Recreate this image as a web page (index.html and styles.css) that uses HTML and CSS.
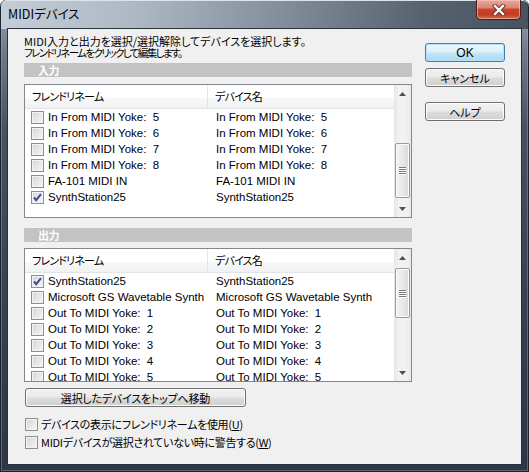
FILE: index.html
```html
<!DOCTYPE html>
<html lang="ja">
<head>
<meta charset="utf-8">
<title>MIDIデバイス</title>
<link rel="stylesheet" href="styles.css">
</head>
<body>
<div class="window">
  <div class="titlebar">
    <span class="title">MIDIデバイス</span>
    <div class="close">
      <svg width="14" height="12" viewBox="0 0 14 12"><path class="xo" d="M3 2L11 10M11 2L3 10"/><path class="xi" d="M3 2L11 10M11 2L3 10"/></svg>
    </div>
  </div>
  <div class="client">
    <div class="main">
      <div class="intro"><div class="l1">MIDI入力と出力を選択/選択解除してデバイスを選択します。</div><div class="l2">フレンドリネームをクリックして編集します。</div></div>
      <div class="section"><span>入力</span></div>
      <div class="listbox">
        <div class="lv">
          <div class="header"><div class="hc c1">フレンドリネーム</div><div class="hc c2">デバイス名</div></div>
          <div class="row"><div class="cell c1"><span class="cb"></span><span class="t">In From MIDI Yoke:  5</span></div><div class="cell c2">In From MIDI Yoke:  5</div></div>
          <div class="row"><div class="cell c1"><span class="cb"></span><span class="t">In From MIDI Yoke:  6</span></div><div class="cell c2">In From MIDI Yoke:  6</div></div>
          <div class="row"><div class="cell c1"><span class="cb"></span><span class="t">In From MIDI Yoke:  7</span></div><div class="cell c2">In From MIDI Yoke:  7</div></div>
          <div class="row"><div class="cell c1"><span class="cb"></span><span class="t">In From MIDI Yoke:  8</span></div><div class="cell c2">In From MIDI Yoke:  8</div></div>
          <div class="row"><div class="cell c1"><span class="cb"></span><span class="t">FA-101 MIDI IN</span></div><div class="cell c2">FA-101 MIDI IN</div></div>
          <div class="row"><div class="cell c1"><span class="cb on"><svg width="11" height="11" viewBox="0 0 11 11"><path d="M2 5.5l2.2 2.6L9 2.2"/></svg></span><span class="t">SynthStation25</span></div><div class="cell c2">SynthStation25</div></div>
        </div>
        <div class="sb">
          <div class="arrow"><svg width="7" height="4" viewBox="0 0 7 4"><path d="M0 4L3.5 0L7 4Z"/></svg></div>
          <div class="track"><div class="thumb bottom"><span></span><span></span><span></span><span></span></div></div>
          <div class="arrow"><svg width="7" height="4" viewBox="0 0 7 4"><path d="M0 0L3.5 4L7 0Z"/></svg></div>
        </div>
      </div>
      <div class="section s2"><span>出力</span></div>
      <div class="listbox l2">
        <div class="lv">
          <div class="header"><div class="hc c1">フレンドリネーム</div><div class="hc c2">デバイス名</div></div>
          <div class="row"><div class="cell c1"><span class="cb on"><svg width="11" height="11" viewBox="0 0 11 11"><path d="M2 5.5l2.2 2.6L9 2.2"/></svg></span><span class="t">SynthStation25</span></div><div class="cell c2">SynthStation25</div></div>
          <div class="row"><div class="cell c1"><span class="cb"></span><span class="t">Microsoft GS Wavetable Synth</span></div><div class="cell c2">Microsoft GS Wavetable Synth</div></div>
          <div class="row"><div class="cell c1"><span class="cb"></span><span class="t">Out To MIDI Yoke:  1</span></div><div class="cell c2">Out To MIDI Yoke:  1</div></div>
          <div class="row"><div class="cell c1"><span class="cb"></span><span class="t">Out To MIDI Yoke:  2</span></div><div class="cell c2">Out To MIDI Yoke:  2</div></div>
          <div class="row"><div class="cell c1"><span class="cb"></span><span class="t">Out To MIDI Yoke:  3</span></div><div class="cell c2">Out To MIDI Yoke:  3</div></div>
          <div class="row"><div class="cell c1"><span class="cb"></span><span class="t">Out To MIDI Yoke:  4</span></div><div class="cell c2">Out To MIDI Yoke:  4</div></div>
          <div class="row"><div class="cell c1"><span class="cb"></span><span class="t">Out To MIDI Yoke:  5</span></div><div class="cell c2">Out To MIDI Yoke:  5</div></div>
        </div>
        <div class="sb">
          <div class="arrow"><svg width="7" height="4" viewBox="0 0 7 4"><path d="M0 4L3.5 0L7 4Z"/></svg></div>
          <div class="track"><div class="thumb top"><span></span><span></span><span></span><span></span></div></div>
          <div class="arrow"><svg width="7" height="4" viewBox="0 0 7 4"><path d="M0 0L3.5 4L7 0Z"/></svg></div>
        </div>
      </div>
      <div class="btn move">選択したデバイスをトップへ移動</div>
      <label class="opt o1"><span class="cb"></span><span>デバイスの表示にフレンドリネームを使用(<u>U</u>)</span></label>
      <label class="opt o2"><span class="cb"></span><span>MIDIデバイスが選択されていない時に警告する(<u>W</u>)</span></label>
    </div>
    <div class="side">
      <div class="btn default">OK</div>
      <div class="btn cancel">キャンセル</div>
      <div class="btn help">ヘルプ</div>
    </div>
  </div>
</div>
</body>
</html>
```

FILE: styles.css
```css
* { box-sizing: border-box; }
html, body { margin: 0; padding: 0; }
body {
  width: 529px;
  height: 472px;
  overflow: hidden;
  background: #ffffff;
  font-family: "Liberation Sans", "Noto Sans CJK JP", sans-serif;
  font-size: 12px;
  color: #000;
  font-feature-settings: "palt";
}
.window {
  width: 529px;
  height: 472px;
  display: flex;
  flex-direction: column;
  border-radius: 6px 6px 0 0;
  background: linear-gradient(to bottom, #9fabb8 0px, #6f7b8a 50px, #46525f 130px, #36424f 300px, #2c3743 100%);
  box-shadow: inset 0 0 0 1px #1c2530, inset 0 0 0 2px rgba(170,185,200,0.35);
  overflow: hidden;
}
.titlebar {
  height: 29px;
  flex: none;
  display: flex;
  align-items: flex-start;
  padding-left: 8px;
  background: linear-gradient(to right, #c4cdd7 0%, #aeb9c5 25%, #7f8b99 55%, #56626f 80%, #47535f 100%);
  box-shadow: inset 0 1px 0 #dde3ea, inset 1px 0 0 #1c2530, inset -1px 0 0 #1c2530;
  border-radius: 6px 6px 0 0;
}
.title {
  margin-top: 7px;
  line-height: 14px;
  font-size: 12.5px;
  color: #000;
  font-family: "Noto Sans CJK JP", sans-serif;
}
.close {
  margin-left: auto;
  margin-right: 8px;
  width: 45px;
  height: 20px;
  border: 1px solid #4a1f1b;
  border-top: none;
  border-radius: 0 0 5px 5px;
  background: linear-gradient(to bottom, #e9aa9b 0%, #d98672 40%, #c9452e 50%, #c43a22 75%, #d8684c 100%);
  box-shadow: inset 0 0 0 1px rgba(255, 210, 200, 0.55);
  display: flex;
  align-items: center;
  justify-content: center;
}
.close svg { display: block; }
.xo { stroke: #6b2a22; stroke-width: 4.2; stroke-linecap: square; fill: none; }
.xi { stroke: #ffffff; stroke-width: 2.4; stroke-linecap: square; fill: none; }

.client {
  flex: 1;
  margin: 0 8px 8px 8px;
  background: #f0f0f0;
  box-shadow: 0 0 0 1px #27313c;
  display: flex;
  gap: 13px;
  padding: 6px 16px 0 16px;
}
.main {
  width: 388px;
  flex: none;
  display: flex;
  flex-direction: column;
}
.intro {
  font-size: 11px;
  font-family: "Noto Sans CJK JP", sans-serif;
  white-space: nowrap;
}
.intro .l1, .intro .l2 { height: 12px; line-height: 12px; }
.intro .l1 { letter-spacing: 0; }
.intro .l2 { font-size: 10.5px; letter-spacing: -1.6px; }
.section {
  margin-top: 4px;
  height: 14px;
  background: #c3c3c3;
  padding-left: 14px;
  font-weight: bold;
  color: #ffffff;
  line-height: 14px;
  font-family: "Noto Sans CJK JP", sans-serif;
  font-size: 11px;
  letter-spacing: -0.5px;
}
.section.s2 { margin-top: 10px; }
.listbox {
  margin-top: 7px;
  height: 134px;
  border: 1px solid #828790;
  background: #ffffff;
  display: flex;
}
.listbox.l2 { margin-top: 6px; }
.lv {
  flex: 1;
  overflow: hidden;
  display: flex;
  flex-direction: column;
}
.header {
  flex: none;
  height: 24px;
  display: flex;
  background: linear-gradient(to bottom, #ffffff 0%, #ffffff 55%, #f7f8f9 56%, #f1f2f4 100%);
  border-bottom: 1px solid #e2e4e7;
}
.hc {
  line-height: 22px;
  font-family: "Noto Sans CJK JP", sans-serif;
  font-size: 11px;
  letter-spacing: -0.8px;
  white-space: nowrap;
}
.c1 { width: 183px; flex: none; }
.hc.c1 { padding-left: 7px; border-right: 1px solid #e3e5e8; }
.hc.c2 { padding-left: 7px; }
.row {
  flex: none;
  height: 16px;
  display: flex;
  align-items: center;
}
.cell {
  white-space: pre;
  font-size: 11.5px;
  line-height: 16px;
  overflow: hidden;
}
.cell.c1 { padding-left: 6px; display: flex; align-items: center; gap: 4px; }
.cell.c2 { padding-left: 8px; }
.cb {
  width: 13px;
  height: 13px;
  flex: none;
  border: 1px solid #8e8f8f;
  background: linear-gradient(135deg, #d4d4d4 0%, #e6e6e6 50%, #f6f6f6 100%);
  box-shadow: inset 0 0 0 1px #f4f4f4;
  display: flex;
  align-items: center;
  justify-content: center;
}
.cb svg { display: block; }
.cb svg path { fill: none; stroke: #3d4f8a; stroke-width: 2; }

.sb {
  width: 17px;
  flex: none;
  display: flex;
  flex-direction: column;
  background: linear-gradient(to right, #e6e6e6 0%, #f2f2f2 30%, #f2f2f2 70%, #e8e8e8 100%);
}
.arrow {
  height: 17px;
  flex: none;
  display: flex;
  align-items: center;
  justify-content: center;
}
.arrow svg path { fill: #505050; }
.track {
  flex: 1;
  display: flex;
  flex-direction: column;
}
.thumb {
  margin: 0 1px;
  border: 1px solid #9a9a9a;
  border-radius: 2px;
  background: linear-gradient(to right, #f3f3f3 0%, #e9e9e9 50%, #d9d9d9 100%);
  box-shadow: inset 0 0 0 1px #fbfbfb;
  display: flex;
  flex-direction: column;
  align-items: center;
  justify-content: center;
  gap: 1px;
}
.thumb span { width: 7px; height: 1px; background: #7a7a7a; box-shadow: 0 1px 0 #ffffff; }
.thumb.bottom { height: 55px; margin-top: auto; margin-bottom: 2px; }
.thumb.top { height: 50px; margin-top: 2px; }

.btn {
  height: 19px;
  border: 1px solid #707070;
  border-radius: 3px;
  background: linear-gradient(to bottom, #f2f2f2 0%, #ebebeb 48%, #dddddd 52%, #cfcfcf 100%);
  box-shadow: inset 0 0 0 1px #fbfbfb;
  display: flex;
  align-items: center;
  justify-content: center;
  font-family: "Noto Sans CJK JP", sans-serif;
  font-size: 11px;
  line-height: 12px;
  white-space: nowrap;
}
.btn.default {
  border-color: #3c7fb1;
  background: linear-gradient(to bottom, #eef8fd 0%, #ddf0fb 48%, #c4e6f8 52%, #abdaf3 100%);
  box-shadow: inset 0 0 0 1px #b6e2f9;
  font-family: "Liberation Sans", sans-serif;
  font-size: 12px;
}
.side {
  width: 80px;
  flex: none;
  display: flex;
  flex-direction: column;
  padding-top: 8px;
}
.btn.cancel { margin-top: 6px; }
.btn.help { margin-top: 15px; }
.btn.move { margin-top: 6px; margin-left: 1px; width: 221px; letter-spacing: -0.2px; }
.opt {
  display: flex;
  align-items: center;
  gap: 3px;
  height: 14px;
  margin-left: 1px;
  font-family: "Noto Sans CJK JP", sans-serif;
  font-size: 11px;
  letter-spacing: -0.3px;
  white-space: nowrap;
}
.opt.o1 { margin-top: 10px; }
.opt.o2 { margin-top: 4px; }
.opt .cb { width: 13px; height: 13px; }
```
